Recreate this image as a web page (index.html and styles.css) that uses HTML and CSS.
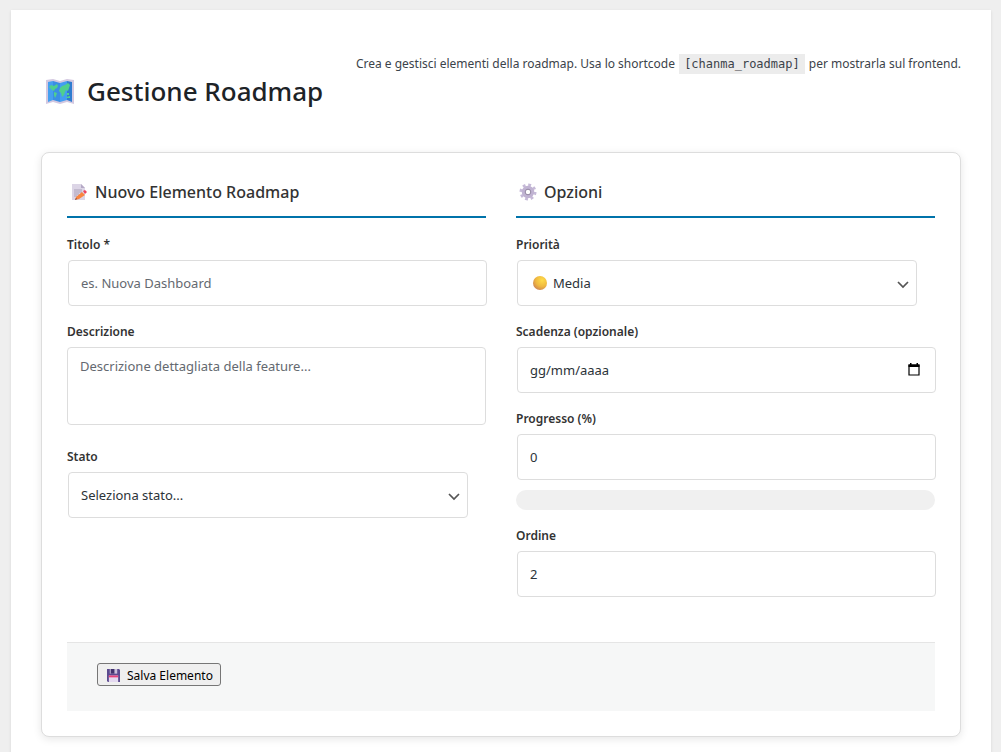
FILE: index.html
```html
<!DOCTYPE html>
<html lang="it">
<head>
    <meta charset="UTF-8">
    <meta name="viewport" content="width=device-width, initial-scale=1.0">
    <title>Gestione Roadmap</title>
    <link rel="stylesheet" href="styles.css">
</head>
<body>

<div class="wrap">
    <header class="page-header">
        <h1>
            <svg class="icon-map" viewBox="0 0 28 25" aria-hidden="true">
                <path d="M0 1 L7 0 L14 2 L21 0 L28 1 V25 L21 23 L14 25 L7 23 L0 25 Z" fill="#d3c8e0"/>
                <path d="M2 3 L7 2 V21 L2 23 Z" fill="#459ff0"/>
                <path d="M7 2 L14 4 V23 L7 21 Z" fill="#3a8ee4"/>
                <path d="M14 4 L21 2 V21 L14 23 Z" fill="#439df2"/>
                <path d="M21 2 L26 3 V23 L21 21 Z" fill="#2f7cd0"/>
                <path d="M3 8 L5 6 L8 7 L11 5 L12 7 L11 9 L9 10 L8 12 L6 11 Z M8 13 L11 14 L10 17 L9 19 L8 16 Z" fill="#4fcf8e"/>
                <path d="M14 9 L16 7 L19 6 L22 4 L24 6 L23 9 L22 12 L20 11 L19 13 L18 16 L16 18 L15 14 L13 12 Z M21 14 H23 V16 H21 Z M20 18 L24 17 V19 H21 Z" fill="#4fcf8e"/>
            </svg>
            Gestione Roadmap
        </h1>
        <p>Crea e gestisci elementi della roadmap. Usa lo shortcode <code>[chanma_roadmap]</code> per mostrarla sul frontend.</p>
    </header>

    <form class="card">
        <div class="columns">
            <div class="column">
                <h2>
                    <svg class="icon-title" viewBox="0 0 18 18" aria-hidden="true">
                        <path d="M2 1 H11 L15 5 V17 H2 Z" fill="#dcd5e6"/>
                        <path d="M11 1 L15 5 H11 Z" fill="#b5a9c6"/>
                        <path d="M4 7 H12 M4 9 H12 M4 11 H9 M4 13 H7" stroke="#aaa0b8" stroke-width="1"/>
                        <path d="M5 17 L6 14 L12 9 L15 12 L9 16 Z" fill="#fa8540"/>
                        <path d="M13 8 L15 7 L17 9 L15 11 Z" fill="#f0425f"/>
                        <path d="M5 17 L6 15 L7 16 Z" fill="#5a4550"/>
                    </svg>
                    Nuovo Elemento Roadmap
                </h2>
                <div class="field">
                    <label for="titolo">Titolo *</label>
                    <input type="text" id="titolo" placeholder="es. Nuova Dashboard">
                </div>
                <div class="field field-area">
                    <label for="descrizione">Descrizione</label>
                    <textarea id="descrizione" placeholder="Descrizione dettagliata della feature..."></textarea>
                </div>
                <div class="field">
                    <label for="stato">Stato</label>
                    <div class="select-box">
                        <select id="stato">
                            <option>Seleziona stato...</option>
                        </select>
                        <svg class="arrow" viewBox="0 0 12 8" aria-hidden="true"><path d="M1 1 L6 6 L11 1" fill="none" stroke="#555" stroke-width="1.7"/></svg>
                    </div>
                </div>
            </div>

            <div class="column">
                <h2>
                    <svg class="icon-title" viewBox="0 0 18 18" aria-hidden="true">
                        <circle cx="9" cy="9" r="7" fill="none" stroke="#c6bad8" stroke-width="3" stroke-dasharray="2.75 2.75"/>
                        <circle cx="9" cy="9" r="4.5" fill="none" stroke="#c0b3d2" stroke-width="3.5"/>
                        <circle cx="9" cy="9" r="2.8" fill="#fff" stroke="#8f829f" stroke-width="1"/>
                    </svg>
                    Opzioni
                </h2>
                <div class="field">
                    <label for="priorita">Priorità</label>
                    <div class="select-box">
                        <svg class="dot" viewBox="0 0 14 14" aria-hidden="true">
                            <defs>
                                <radialGradient id="dotFill" cx="65%" cy="30%" r="75%">
                                    <stop offset="0" stop-color="#ffdc4a"/>
                                    <stop offset="0.6" stop-color="#efb840"/>
                                    <stop offset="1" stop-color="#cf8650"/>
                                </radialGradient>
                            </defs>
                            <circle cx="7" cy="7" r="7" fill="url(#dotFill)"/>
                        </svg>
                        <select id="priorita" class="with-dot">
                            <option>Media</option>
                        </select>
                        <svg class="arrow" viewBox="0 0 12 8" aria-hidden="true"><path d="M1 1 L6 6 L11 1" fill="none" stroke="#555" stroke-width="1.7"/></svg>
                    </div>
                </div>
                <div class="field">
                    <label for="scadenza">Scadenza (opzionale)</label>
                    <div class="date-box">
                        <input type="text" id="scadenza" class="date" placeholder="gg/mm/aaaa">
                        <svg class="calendar" viewBox="0 0 12 13" aria-hidden="true">
                            <path d="M1 2 H11 V12 H1 Z" fill="none" stroke="#000" stroke-width="1.2"/>
                            <path d="M0.5 1.5 H11.5 V4 H0.5 Z M2 0 H3.5 V2 H2 Z M8.5 0 H10 V2 H8.5 Z" fill="#000"/>
                        </svg>
                    </div>
                </div>
                <div class="field">
                    <label for="progresso">Progresso (%)</label>
                    <input type="number" id="progresso" min="0" max="100" value="0">
                    <div class="progress"><div class="progress-fill" style="width: 0%"></div></div>
                </div>
                <div class="field">
                    <label for="ordine">Ordine</label>
                    <input type="number" id="ordine" value="2">
                </div>
            </div>
        </div>

        <div class="actions">
            <button type="submit">
                <svg class="icon-save" viewBox="0 0 14 14" aria-hidden="true">
                    <path d="M0 0 H13 L14 1 V14 H1 L0 13 Z" fill="#5b4a8f"/>
                    <path d="M3 0 H11 V5 H3 Z" fill="#c9bfdc"/>
                    <path d="M4 0 H8 V5 H4 Z" fill="#40316b"/>
                    <path d="M2 7 H12 V14 H2 Z" fill="#e4d9f0"/>
                    <path d="M2 7 H12 V9 H2 Z" fill="#e8407a"/>
                </svg>
                Salva Elemento
            </button>
        </div>
    </form>
</div>

</body>
</html>
```

FILE: styles.css
```css
* {
    box-sizing: border-box;
}

body {
    margin: 0;
    padding: 10px 10px 0 11px;
    background: #efefef;
    color: #3c434a;
    font-family: "Segoe UI", "Noto Sans", "Open Sans", sans-serif;
    font-size: 13px;
    line-height: 20px;
}

.wrap {
    padding: 30px;
    background: #fff;
    box-shadow: 0 1px 3px rgba(0, 0, 0, 0.1);
}

.page-header {
    display: flex;
    justify-content: space-between;
    align-items: flex-start;
    margin-bottom: 43px;
}

.page-header p {
    margin: 14px 0 0;
    font-size: 12px;
    white-space: nowrap;
}

.page-header code {
    margin: 0 1px;
    padding: 3px 5px;
    background: #ececec;
    font-family: Consolas, "DejaVu Sans Mono", monospace;
    font-size: 12px;
}

h1 {
    display: flex;
    align-items: center;
    gap: 13px;
    margin: 33px 0 0;
    padding-left: 5px;
    color: #1d2327;
    font-size: 26px;
    font-weight: 500;
    line-height: 36px;
    white-space: nowrap;
}

.icon-map {
    width: 28px;
    height: 25px;
}

.card {
    padding: 25px;
    border: 1px solid #ddd;
    border-radius: 8px;
    background: #fff;
    box-shadow: 0 2px 8px rgba(0, 0, 0, 0.1);
}

.columns {
    display: grid;
    grid-template-columns: 1fr 1fr;
    gap: 30px;
}

h2 {
    display: flex;
    align-items: center;
    gap: 7px;
    margin: 0 0 16px;
    padding: 0 0 10px 3px;
    border-bottom: 2px solid #0073aa;
    color: #333;
    font-size: 16px;
    font-weight: 500;
    line-height: 28px;
}

.icon-title {
    width: 18px;
    height: 18px;
}

.field {
    margin-bottom: 15px;
}

.field-area {
    margin-bottom: 21px;
}

label {
    display: block;
    margin-bottom: 5px;
    padding-top: 1px;
    color: #333;
    font-size: 12px;
    font-weight: 600;
}

input, select, textarea {
    display: block;
    width: 100%;
    height: 46px;
    margin: 0 0 0 1px;
    padding: 0 12px;
    border: 1px solid #ddd;
    border-radius: 4px;
    background: #fff;
    color: #2c3338;
    font-family: inherit;
    font-size: 13px;
    line-height: 20px;
}

textarea {
    height: 78px;
    margin: 0;
    padding: 8px 12px;
    resize: none;
}

select {
    appearance: none;
}

input::placeholder, textarea::placeholder {
    color: #646970;
}

.date::placeholder {
    color: #2c3338;
}

input[type="number"] {
    appearance: textfield;
}

.select-box, .date-box {
    position: relative;
}

.select-box {
    max-width: 400px;
}

.with-dot {
    padding-left: 35px;
}

.dot {
    position: absolute;
    top: 16px;
    left: 17px;
    width: 14px;
    height: 14px;
}

.arrow {
    position: absolute;
    top: 21px;
    right: 7px;
    width: 12px;
    height: 8px;
}

.calendar {
    position: absolute;
    top: 16px;
    right: 15px;
    width: 12px;
    height: 13px;
}

.progress {
    height: 20px;
    margin-top: 10px;
    border-radius: 10px;
    background: #f0f0f0;
    overflow: hidden;
}

.progress-fill {
    height: 100%;
    background: #0073aa;
}

.actions {
    margin-top: 30px;
    padding: 20px 30px 25px;
    border-top: 1px solid #e5e5e5;
    background: #f6f7f7;
}

button {
    display: flex;
    align-items: center;
    gap: 7px;
    height: 23px;
    padding: 1px 7px 0 9px;
    border: 1px solid #767676;
    border-radius: 3px;
    background: #efefef;
    color: #000;
    font-family: inherit;
    font-size: 12px;
    white-space: nowrap;
}

.icon-save {
    width: 13px;
    height: 13px;
}
```
